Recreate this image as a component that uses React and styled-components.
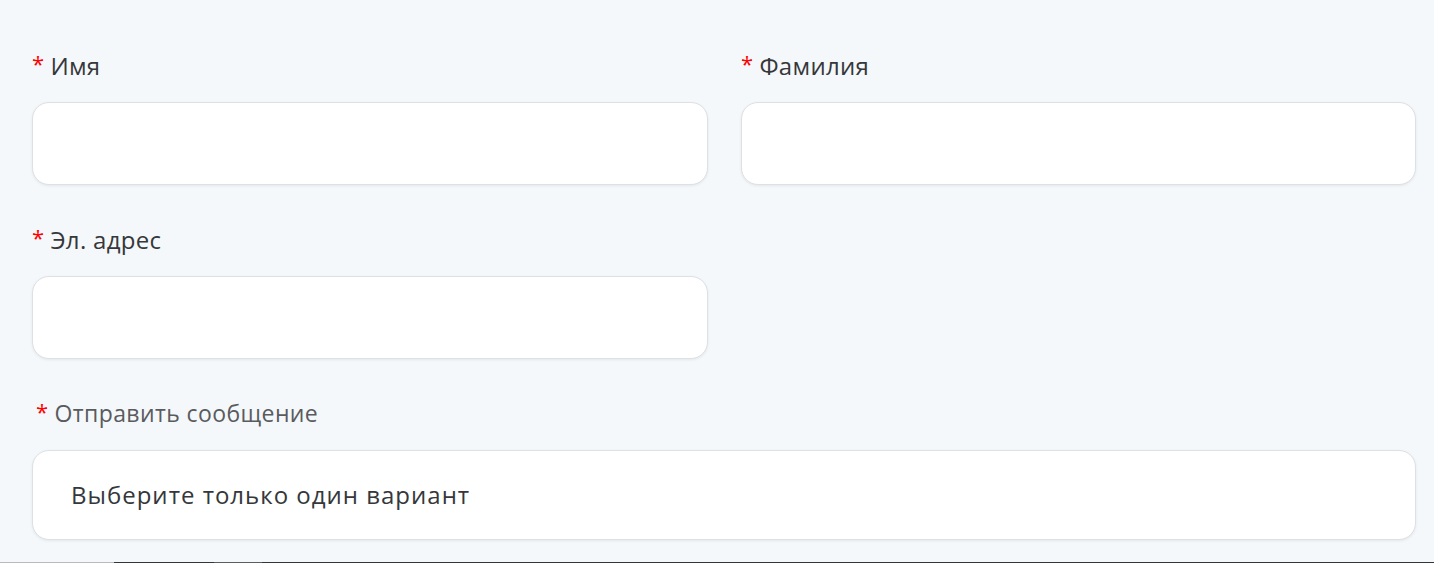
import React from "react";
import styled, { createGlobalStyle } from "styled-components";

const Global = createGlobalStyle`
  html, body { margin: 0; padding: 0; background: #f5f8fb; }
  body { font-family: "Open Sans", "Noto Sans", sans-serif; }
`;

const Page = styled.div`
  min-height: 563px;
  box-sizing: border-box;
  padding: 50px 18px 0 32px;
  display: flex;
  flex-direction: column;
  position: relative;
`;

const Grid = styled.div`
  display: grid;
  grid-template-columns: 676px 675px;
  column-gap: 33px;
  row-gap: 39px;
`;

const Field = styled.div`
  display: flex;
  flex-direction: column;
  gap: 22px;
  grid-column: ${(p) => (p.$full ? "1 / -1" : "auto")};
`;

const Label = styled.label`
  display: flex;
  align-items: center;
  gap: 6px;
  height: 30px;
  font-size: ${(p) => (p.$muted ? "23px" : "24px")};
  letter-spacing: ${(p) => (p.$muted ? "0.4px" : "0.3px")};
  color: ${(p) => (p.$muted ? "#5a5b5e" : "#35373b")};
  padding-left: ${(p) => (p.$muted ? "4px" : "0")};
`;

const Star = styled.span`
  color: #ff0000;
  font-size: 22px;
  line-height: 1;
  position: relative;
  top: -2px;
`;

const Input = styled.div`
  height: 83px;
  box-sizing: border-box;
  background: #fff;
  border: 1px solid #dde0e4;
  border-radius: 17px;
  box-shadow: 0 1px 3px rgba(0, 0, 0, 0.07);
`;

const Select = styled(Input)`
  height: 90px;
  display: flex;
  align-items: center;
  padding-left: 38px;
  padding-bottom: 2px;
  font-size: 24px;
  letter-spacing: 1px;
  color: #35373b;
`;

const BottomBar = styled.div`
  position: absolute;
  left: 0;
  right: 0;
  bottom: 0;
  height: 1px;
  display: flex;
`;

const Seg = styled.div`
  height: 1px;
  width: ${(p) => p.$w};
  flex: ${(p) => (p.$grow ? 1 : "none")};
  background: ${(p) => p.$c};
`;

export default function App() {
  return (
    <>
      <Global />
      <Page>
        <Grid>
          <Field>
            <Label><Star>*</Star>Имя</Label>
            <Input />
          </Field>
          <Field>
            <Label><Star>*</Star>Фамилия</Label>
            <Input />
          </Field>
          <Field>
            <Label><Star>*</Star>Эл. адрес</Label>
            <Input />
          </Field>
          <div />
          <Field $full>
            <Label $muted><Star>*</Star>Отправить сообщение</Label>
            <Select>Выберите только один вариант</Select>
          </Field>
        </Grid>
        <BottomBar>
          <Seg $w="114px" $c="#b8babd" />
          <Seg $w="100px" $c="#33373c" />
          <Seg $w="48px" $c="#5a5d61" />
          <Seg $grow $c="#33373c" />
        </BottomBar>
      </Page>
    </>
  );
}
